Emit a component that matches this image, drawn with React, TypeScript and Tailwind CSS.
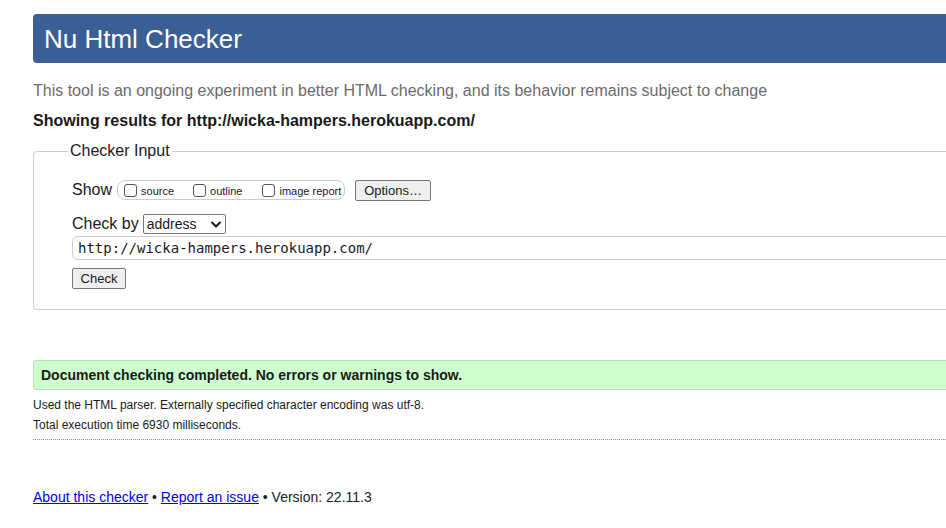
import React from 'react';

const App: React.FC = () => {
  return (
    <div className="w-[946px] h-[528px] overflow-hidden bg-white text-[#1a1a1a]" style={{ fontFamily: '"Liberation Sans", Arial, sans-serif' }}>
      <div className="w-[1000px] pl-[33px] pt-[14px]">
        {/* Title bar */}
        <div className="h-[49px] bg-[#3a5f94] rounded-[4px] flex items-center pl-[11px]">
          <h1 className="text-white text-[26px] leading-none font-normal">Nu Html Checker</h1>
        </div>

        <p className="mt-[18px] text-[16px] leading-[20px] text-[#6b6b6b]">
          This tool is an ongoing experiment in better HTML checking, and its behavior remains subject to change
        </p>
        <p className="mt-[10px] text-[16px] leading-[20px] font-bold">
          Showing results for http://wicka-hampers.herokuapp.com/
        </p>

        {/* Checker input */}
        <fieldset className="mt-[10px] h-[169px] border border-[#cccccc] rounded-[4px] pl-[38px] pr-0">
          <legend className="-ml-[4px] px-[2px] text-[16px] leading-[20px]">Checker Input</legend>

          <div className="mt-[18px] flex items-center h-[22px]">
            <span className="text-[16px]">Show</span>
            <div className="ml-[5px] h-[20px] w-[228px] border border-[#cccccc] rounded-[8px] flex items-center pl-[6px] text-[11px]">
              <span className="flex items-center">
                <span className="w-[13px] h-[13px] border border-[#555] rounded-[3px]" />
                <span className="ml-[4px] mt-[2px]">source</span>
              </span>
              <span className="flex items-center ml-[19px]">
                <span className="w-[13px] h-[13px] border border-[#555] rounded-[3px]" />
                <span className="ml-[4px] mt-[2px]">outline</span>
              </span>
              <span className="flex items-center ml-[20px]">
                <span className="w-[13px] h-[13px] border border-[#555] rounded-[3px]" />
                <span className="ml-[4px] mt-[2px]">image report</span>
              </span>
            </div>
            <button className="ml-[10px] h-[21px] w-[76px] border border-[#767676] rounded-[2px] bg-[#efefef] text-[13px] leading-none">
              Options…
            </button>
          </div>

          <div className="mt-[13px] flex items-center h-[20px]">
            <span className="text-[16px]">Check by</span>
            <div className="ml-[4px] h-[20px] w-[83px] border border-[#767676] rounded-[2px] flex items-center justify-between pl-[3px] pr-[4px] text-[14px]">
              <span>address</span>
              <svg width="10" height="7" viewBox="0 0 10 7">
                <path d="M1 1.5 L5 5.5 L9 1.5" stroke="#111" strokeWidth="1.8" fill="none" strokeLinecap="round" strokeLinejoin="round" />
              </svg>
            </div>
          </div>

          <div className="mt-[2px] h-[24px] border border-[#cccccc] rounded-[6px] flex items-center pl-[5px] text-[14px]" style={{ fontFamily: '"DejaVu Sans Mono", monospace' }}>
            http://wicka-hampers.herokuapp.com/
          </div>

          <button className="mt-[8px] h-[21px] w-[54px] border border-[#767676] rounded-[2px] bg-[#efefef] text-[13px] leading-none">
            Check
          </button>
        </fieldset>

        {/* Result */}
        <div className="mt-[50px] h-[30px] bg-[#ccffcc] border border-[#b8ddb8] rounded-[3px] flex items-center pl-[7px] text-[14px] font-bold">
          Document checking completed. No errors or warnings to show.
        </div>
        <p className="mt-[8px] text-[12px] leading-[14px]">
          Used the HTML parser. Externally specified character encoding was utf-8.
        </p>
        <p className="mt-[6px] text-[12px] leading-[14px]">Total execution time 6930 milliseconds.</p>
        <div className="mt-[7px] w-[913px] border-t border-dotted border-[#888]" />

        {/* Footer */}
        <p className="mt-[48px] text-[14px] leading-[18px] text-[#222]">
          <a href="#" className="text-[#0000ee] underline">About this checker</a>
          {' • '}
          <a href="#" className="text-[#0000ee] underline">Report an issue</a>
          {' • Version: 22.11.3'}
        </p>
      </div>
    </div>
  );
};

export default App;
